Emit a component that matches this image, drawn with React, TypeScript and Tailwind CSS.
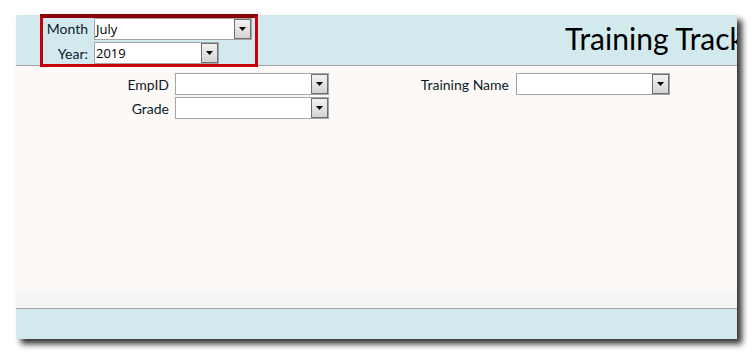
import React from "react";

function Combo({ value, width }: { value?: string; width: string }) {
  return (
    <div
      className={`flex h-[22px] items-center border border-[#a5a5a5] bg-white ${width}`}
    >
      <span className="flex-1 truncate pl-[1px] text-[13px] leading-[18px] text-black [font-family:'Open_Sans',sans-serif]">
        {value}
      </span>
      <div className="flex h-[20px] w-[17px] items-center justify-center border border-[#6f6f6f] bg-gradient-to-b from-[#f2f2f2] to-[#d4d4d4]">
        <svg width="7" height="4" viewBox="0 0 7 4">
          <path d="M0 0h7L3.5 4z" fill="#000" />
        </svg>
      </div>
    </div>
  );
}

export default function App() {
  const font = "[font-family:Lato,'Open_Sans',sans-serif]";
  return (
    <div className="relative h-[357px] w-[753px] overflow-hidden bg-white pl-[16px] pt-[15px]">
      <div className="flex h-[324px] w-[721px] flex-col bg-[#fdf9f6] shadow-[5px_5px_6px_rgba(0,0,0,0.8)]">
        {/* header */}
        <div className="flex h-[51px] shrink-0 overflow-hidden whitespace-nowrap border-b border-[#a5a5a5] bg-[#d2e9ee]">
          <div className={`ml-[24px] mt-[2px] grid grid-cols-[48px_auto] items-center gap-x-[6px] gap-y-[1px] text-[14px] text-[#0c1a2e] ${font}`}>
            <span className="text-right">Month</span>
            <Combo value="July" width="w-[158px]" />
            <span className="text-right">Year:</span>
            <Combo value="2019" width="w-[125px]" />
          </div>
          <div className={`ml-[313px] mt-[8px] text-[30px] leading-none text-black ${font}`}>
            Training Tracker
          </div>
        </div>
        {/* body */}
        <div className={`flex flex-1 pt-[7px] text-[14px] text-[#0c1a2e] ${font}`}>
          <div className="grid h-fit grid-cols-[153px_154px] items-center gap-x-[6px] gap-y-[2px]">
            <span className="text-right">EmpID</span>
            <Combo width="w-[154px]" />
            <span className="text-right">Grade</span>
            <Combo width="w-[154px]" />
          </div>
          <div className="grid h-fit grid-cols-[180px_154px] items-center gap-x-[7px]">
            <span className="text-right">Training Name</span>
            <Combo width="w-[154px]" />
          </div>
        </div>
        <div className="h-[18px] shrink-0 border-b border-[#a5a5a5] bg-[#f5f5f5]" />
        <div className="h-[30px] shrink-0 bg-[#d2e9ee]" />
      </div>
      {/* highlight box */}
      <div className="absolute left-[40px] top-[14px] h-[53px] w-[218px] border-[3px] border-[#c8000a] border-t-[4px] border-t-[#8a0008]" />
    </div>
  );
}
